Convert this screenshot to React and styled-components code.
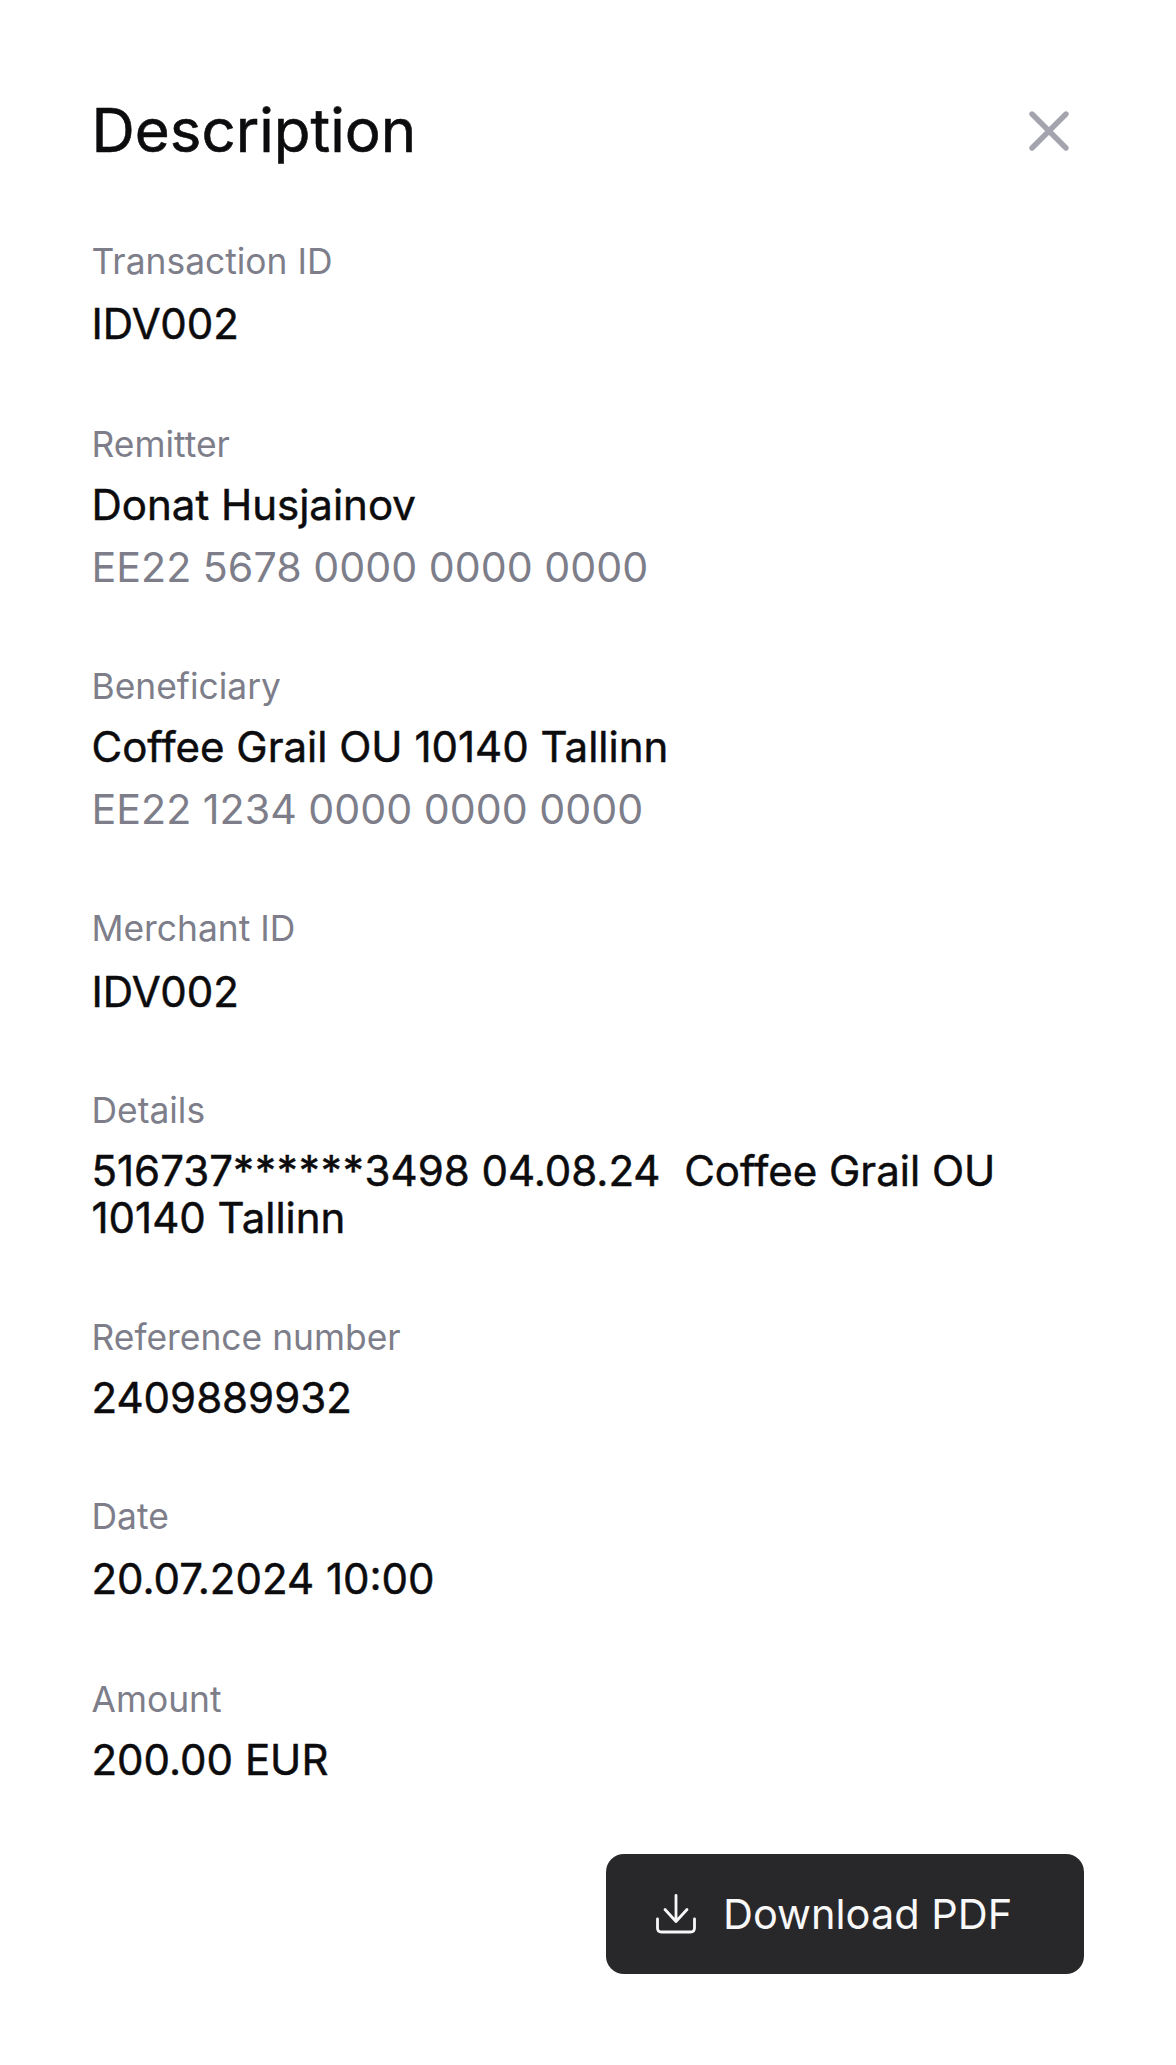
import React from 'react';
import styled, { createGlobalStyle } from 'styled-components';

const Global = createGlobalStyle`
  html, body { margin: 0; padding: 0; background: #fff; }
  body { font-family: Inter, "Liberation Sans", sans-serif; }
`;
const Page = styled.div`
  width: 1176px; height: 2065px; box-sizing: border-box; padding: 96px 92px 0 91.5px; display: flex; flex-direction: column;
`;
const Header = styled.header`
  display: flex; justify-content: space-between; align-items: center; height: 68px; margin-bottom: 78px;
`;
const Title = styled.h1`
  margin: 0; font-size: 60px; line-height: 68px; font-weight: 400; color: #0c0c0e; -webkit-text-stroke: 0.6px #0c0c0e;
`;
const Close = styled.button`
  border: 0; background: none; padding: 0; margin: 1px 13px 0 0; width: 44px; height: 44px; display: flex; color: #a3a4ad;
`;
const Field = styled.section`
  display: flex; flex-direction: column; margin-bottom: ${p => p.$gap}px;
`;
const Label = styled.div`
  font-size: 35.4px; line-height: 40px; color: #7d7e8a; margin-bottom: ${p => p.$gap}px;
`;
const Value = styled.div`
  font-size: 42px; line-height: 47px; font-weight: 400; color: #0c0c0e; width: 930px; -webkit-text-stroke: 0.5px #0c0c0e;
`;
const Masked = styled.span`
  letter-spacing: 0.9px;
`;
const Sub = styled.div`
  font-size: 41.2px; line-height: 47px; color: #7d7e8a; margin-top: 16px;
`;
const Footer = styled.div`
  display: flex; justify-content: flex-end;
`;
const Download = styled.button`
  width: 478px; height: 120px; border: 0; border-radius: 18px; background: #28282a; color: #f8f8f8;
  font: 400 41.5px/48px Inter, "Liberation Sans", sans-serif; display: flex; align-items: center; gap: 27px; padding: 0 0 0 50px; box-sizing: border-box;
`;

const fields = [
  { label: 'Transaction ID', value: 'IDV002', lg: 18, gap: 78 },
  { label: 'Remitter', value: 'Donat Husjainov', sub: 'EE22 5678 0000 0000 0000', lg: 16, gap: 76 },
  { label: 'Beneficiary', value: 'Coffee Grail OU 10140 Tallinn', sub: 'EE22 1234 0000 0000 0000', lg: 16, gap: 76 },
  { label: 'Merchant ID', value: 'IDV002', lg: 19, gap: 76 },
  { label: 'Details', value: <>516737<Masked>******</Masked>3498 04.08.24{'\u00a0'} Coffee Grail OU 10140 Tallinn</>, lg: 16, gap: 77 },
  { label: 'Reference number', value: '2409889932', lg: 16, gap: 76 },
  { label: 'Date', value: '20.07.2024 10:00', lg: 18, gap: 78 },
  { label: 'Amount', value: '200.00 EUR', lg: 16, gap: 71 },
];

export default function App() {
  return (
    <Page>
      <Global />
      <Header>
        <Title>Description</Title>
        <Close aria-label="Close">
          <svg width="44" height="44" viewBox="0 0 44 44" fill="none" stroke="currentColor" strokeWidth="5.4" strokeLinecap="round">
            <path d="M5 5 L39 39 M39 5 L5 39" />
          </svg>
        </Close>
      </Header>
      {fields.map(f => (
        <Field key={f.label} $gap={f.gap}>
          <Label $gap={f.lg}>{f.label}</Label>
          <Value>{f.value}</Value>
          {f.sub && <Sub>{f.sub}</Sub>}
        </Field>
      ))}
      <Footer>
        <Download>
          <svg width="40" height="40" viewBox="0 0 40 40" fill="none" stroke="currentColor" strokeWidth="2.8" strokeLinecap="round" strokeLinejoin="round">
            <path d="M20 1.5 V27 M9 15.5 L20 27.5 L31 15.5" />
            <path d="M1.5 25 V34 Q1.5 38 5.5 38 H34.5 Q38.5 38 38.5 34 V25" />
          </svg>
          Download PDF
        </Download>
      </Footer>
    </Page>
  );
}
